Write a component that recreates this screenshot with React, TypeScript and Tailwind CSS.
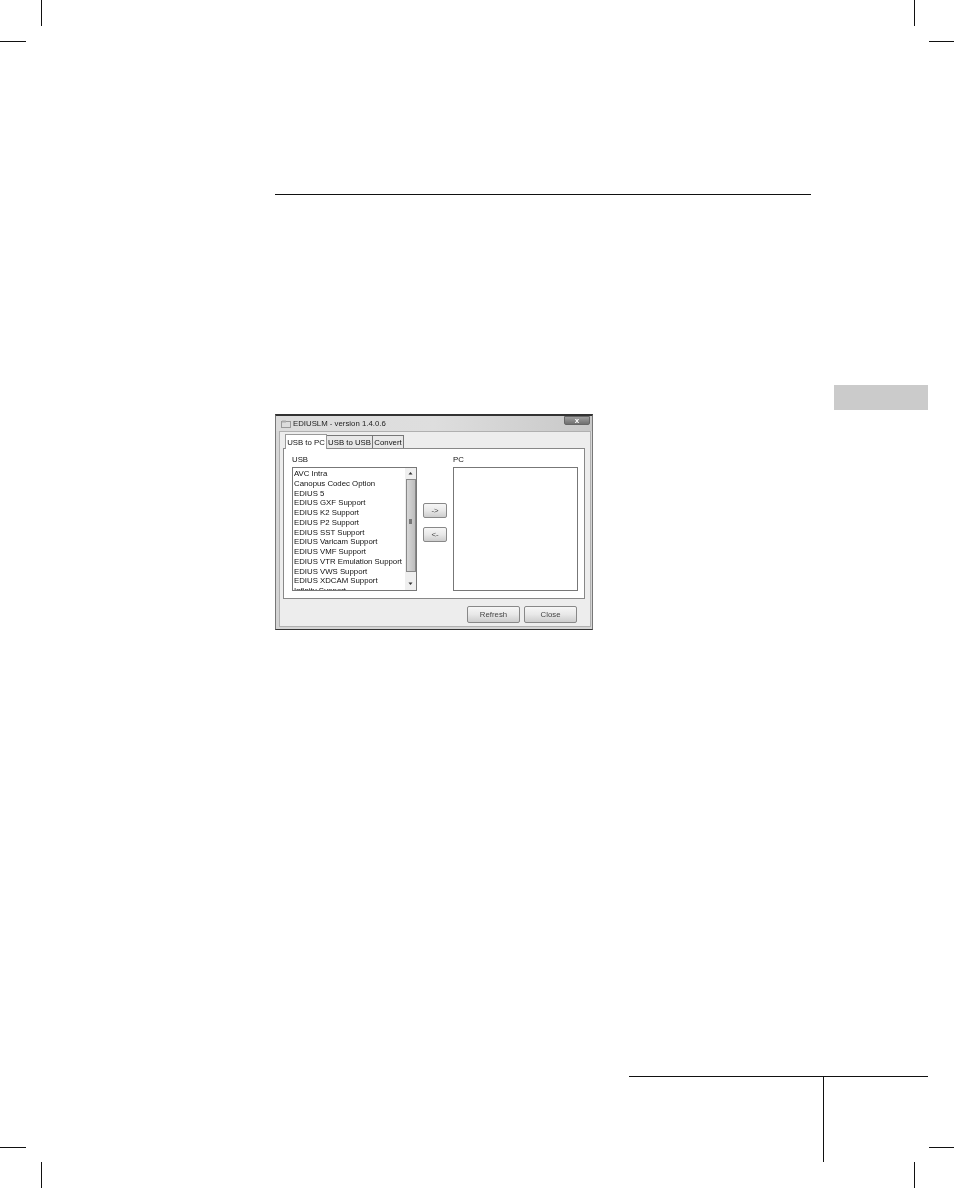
const items = [
  "AVC Intra",
  "Canopus Codec Option",
  "EDIUS 5",
  "EDIUS GXF Support",
  "EDIUS K2 Support",
  "EDIUS P2 Support",
  "EDIUS SST Support",
  "EDIUS Varicam Support",
  "EDIUS VMF Support",
  "EDIUS VTR Emulation Support",
  "EDIUS VWS Support",
  "EDIUS XDCAM Support",
  "Infinity Support",
];

function Mark({ className }: { className: string }) {
  return <div className={`absolute bg-[#111] ${className}`} />;
}

function Btn({ label, className }: { label: string; className: string }) {
  return (
    <div
      className={`flex items-center justify-center rounded-[2px] border border-[#888] bg-gradient-to-b from-[#f6f6f6] via-[#e8e8e8] to-[#cdcdcd] text-[#444] ${className}`}
    >
      {label}
    </div>
  );
}

function Dialog() {
  return (
    <div className="mt-[219px] flex h-[216px] w-[318px] flex-col border-x border-b border-t-2 border-x-[#777] border-b-[#333] border-t-[#333] bg-gradient-to-b from-[#d8d8d8] to-[#d4d4d4] font-['Liberation_Sans',sans-serif] text-[7.8px] leading-[10px] text-[#111] blur-[0.3px]">
      <div className="flex h-[15px] shrink-0 items-center bg-gradient-to-r from-[#dcdcdc] via-[#dedede] to-[#c8c8c8] pr-[2px] pl-[5px]">
        <svg width="10" height="8" viewBox="0 0 10 8" className="mr-[2px]">
          <rect x="0.5" y="1.5" width="9" height="6" fill="#ddd" stroke="#999" />
          <rect x="1" y="0.5" width="4" height="2" fill="#aaa" />
        </svg>
        <span className="text-[#222]">EDIUSLM - version 1.4.0.6</span>
        <div className="ml-auto flex h-[9px] w-[26px] items-center justify-center self-start rounded-b-[2px] border border-[#666] bg-gradient-to-b from-[#a0a0a0] to-[#707070] text-[8px] leading-none font-bold text-white">
          x
        </div>
      </div>
      <div className="mr-px mb-[2px] ml-[3px] flex flex-1 flex-col border border-[#b0b0b0] bg-[#ededed] pt-px pl-[3px]">
        <div className="flex h-[15px] shrink-0 items-end pl-[2px]">
          <div className="relative z-10 -mb-px flex h-[15px] w-[42px] items-center justify-center border-x border-t border-x-[#999] border-t-[#999] bg-white pt-px">
            USB to PC
          </div>
          <div className="flex h-[13px] w-[46px] items-center justify-center border-t border-r border-[#777] bg-[#e8e8e8] pt-px">
            USB to USB
          </div>
          <div className="flex h-[13px] w-[31px] items-center justify-center border-t border-r border-[#777] bg-[#e8e8e8] pt-px">
            Convert
          </div>
        </div>
        <div className="flex h-[151px] w-[302px] shrink-0 border border-[#888] bg-white pt-[6px] pl-[8px]">
          <div className="flex w-[125px] flex-col">
            <div className="h-[12px]">USB</div>
            <div className="flex h-[124px] overflow-hidden border border-[#777] bg-white">
              <div className="h-full flex-1 overflow-hidden pt-px pl-[1px] leading-[9.75px] whitespace-nowrap">
                {items.map((t) => (
                  <div key={t} className="h-[9.75px]">
                    {t}
                  </div>
                ))}
              </div>
              <div className="flex w-[11px] shrink-0 flex-col items-center bg-[#efefef]">
                <svg width="7" height="11" viewBox="0 0 7 11" className="shrink-0">
                  <path d="M3.5 4L1.5 6.5H5.5Z" fill="#333" />
                </svg>
                <div className="flex h-[93px] w-[10px] shrink-0 items-center justify-center border border-[#888] bg-gradient-to-r from-[#d8d8d8] to-[#bdbdbd]">
                  <div className="-mt-[9px] h-[5px] w-[3px] bg-[#777]" />
                </div>
                <svg width="7" height="11" viewBox="0 0 7 11" className="mt-auto shrink-0">
                  <path d="M1.5 3.5H5.5L3.5 6Z" fill="#333" />
                </svg>
              </div>
            </div>
          </div>
          <div className="ml-[6px] flex w-[24px] shrink-0 flex-col pt-[48px]">
            <Btn label="->" className="h-[15px]" />
            <Btn label="<-" className="mt-[9px] h-[15px]" />
          </div>
          <div className="ml-[6px] flex w-[125px] flex-col">
            <div className="h-[12px]">PC</div>
            <div className="h-[124px] border border-[#777] bg-white" />
          </div>
        </div>
        <div className="flex w-[302px] flex-1 justify-end gap-[4px] pt-[7px] pr-[8px]">
          <Btn label="Refresh" className="h-[17px] w-[53px]" />
          <Btn label="Close" className="h-[17px] w-[53px]" />
        </div>
      </div>
    </div>
  );
}

export default function App() {
  return (
    <div className="relative h-[1188px] w-[954px] overflow-hidden bg-white">
      <Mark className="top-0 left-[41px] h-[26px] w-px" />
      <Mark className="top-[41px] left-0 h-px w-[26px]" />
      <Mark className="top-0 left-[914px] h-[26px] w-px" />
      <Mark className="top-[41px] left-[929px] h-px w-[25px]" />
      <Mark className="top-[1147px] left-0 h-px w-[26px]" />
      <Mark className="top-[1162px] left-[41px] h-[26px] w-px" />
      <Mark className="top-[1147px] left-[929px] h-px w-[25px]" />
      <Mark className="top-[1162px] left-[914px] h-[26px] w-px" />

      <div className="flex h-[1076px] pt-[194px] pl-[275px]">
        <div className="w-[536px]">
          <div className="h-px bg-[#111]" />
          <Dialog />
        </div>
        <div className="mt-[191px] ml-[23px] h-[25px] w-[94px] bg-[#cbcbcb]" />
      </div>
      <div className="ml-[629px] h-[86px] w-[299px] border-t border-[#111]">
        <div className="ml-[194px] h-full w-px bg-[#111]" />
      </div>
    </div>
  );
}
